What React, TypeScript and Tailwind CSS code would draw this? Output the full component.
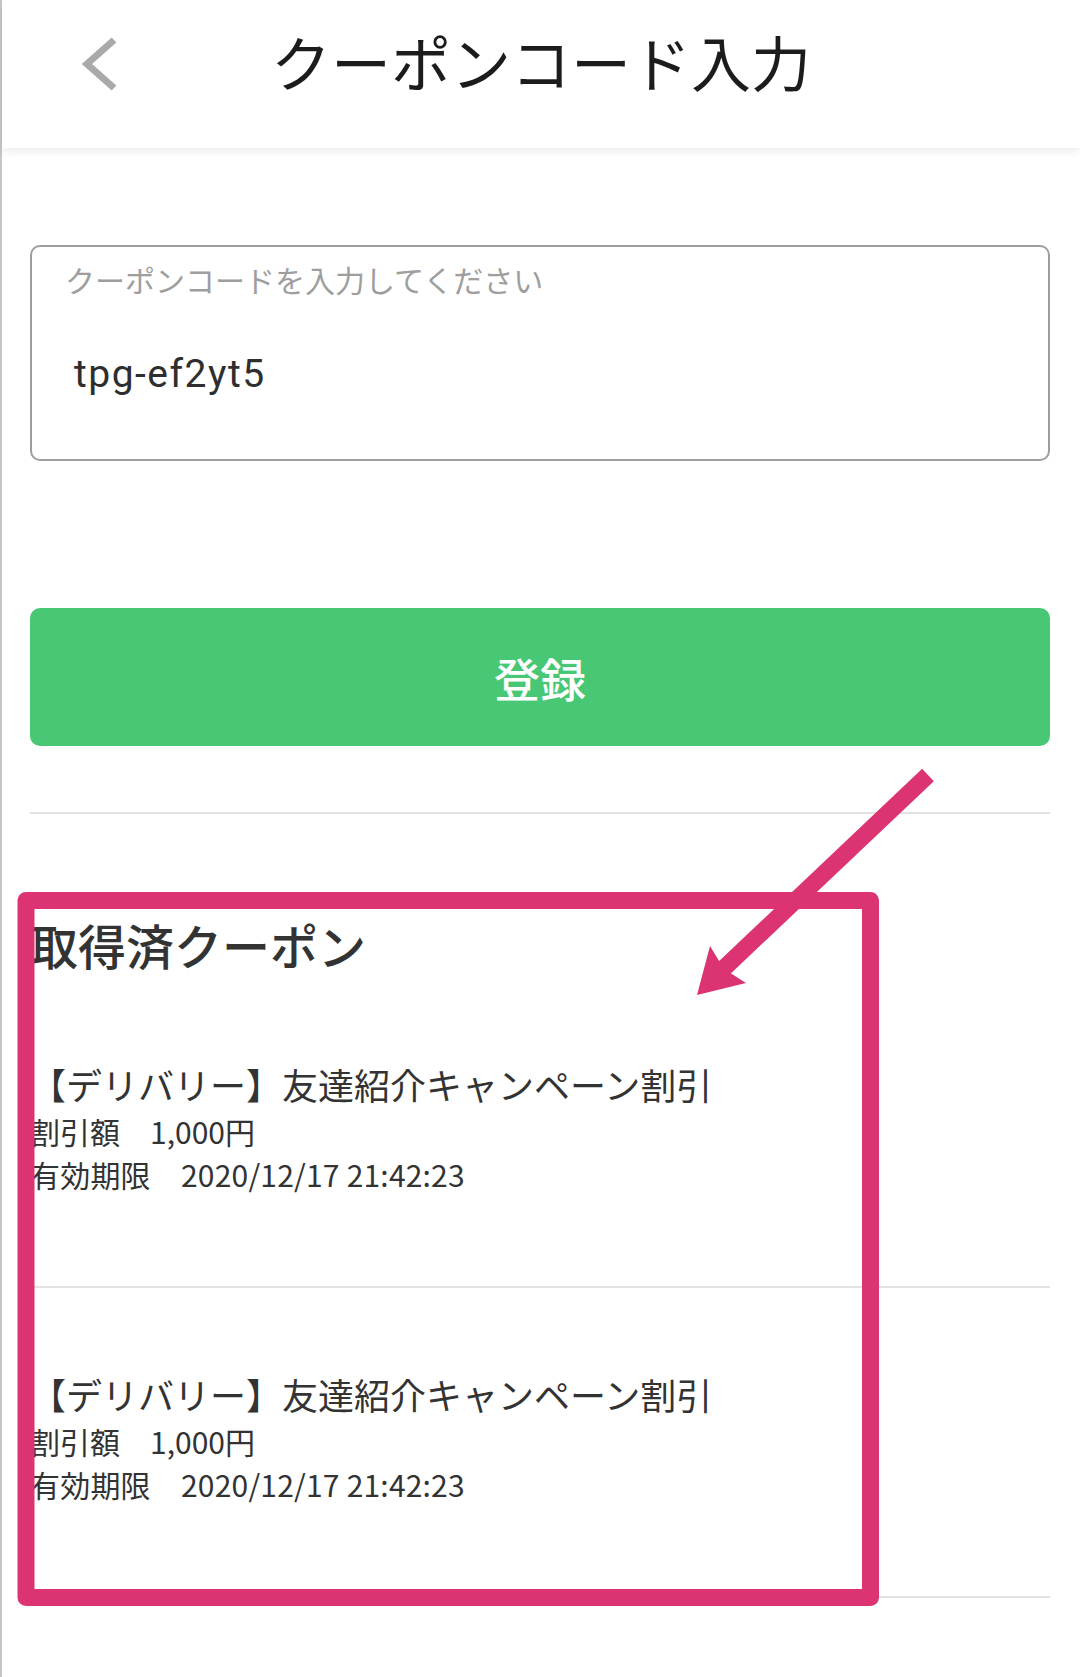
import React from 'react'

const coupons = [
  { title: '【デリバリー】友達紹介キャンペーン割引', amount: '1,000円', expires: '2020/12/17 21:42:23' },
  { title: '【デリバリー】友達紹介キャンペーン割引', amount: '1,000円', expires: '2020/12/17 21:42:23' },
]

function BackIcon() {
  return (
    <svg width="40" height="60" viewBox="0 0 40 60" className="ml-[78px] mt-[6px]">
      <polyline points="34,6 7,30 34,54" fill="none" stroke="#a9a9a9" strokeWidth="7" strokeLinejoin="miter" />
    </svg>
  )
}

function Annotation() {
  return (
    <svg className="pointer-events-none absolute left-0 top-0" width="1080" height="1677" viewBox="0 0 1080 1677">
      {/* highlight box */}
      <rect x="24" y="900.5" width="844.5" height="697" fill="none" stroke="#dc3473" strokeWidth="17" strokeLinejoin="round" />
      {/* arrow */}
      <line x1="926" y1="775" x2="718" y2="972" stroke="#dc3473" strokeWidth="17" />
      <polygon points="695,995 708,946 722,969 744,983" fill="#dc3473" />
    </svg>
  )
}

export default function App() {
  return (
    <div className="relative min-h-[1677px] w-[1080px] border-l-2 border-[#c6c6c6] bg-white font-['Noto_Sans_CJK_JP','Noto_Sans',sans-serif]">
      {/* Header */}
      <header className="relative z-10 h-[148px] bg-white shadow-[0_4px_8px_rgba(0,0,0,0.07)]">
        <div className="grid h-[122px] grid-cols-[1fr_auto_1fr] items-center">
          <div>
            <BackIcon />
          </div>
          <h1 className="text-[60px] leading-none font-normal text-[#1c1c1c]">クーポンコード入力</h1>
          <div />
        </div>
      </header>

      <main className="pl-[28px] pr-[30px]">
        {/* Coupon code input */}
        <div className="mt-[97px] h-[216px] rounded-[10px] border-2 border-[#9e9e9e] pl-[33px] pt-[17px]">
          <div className="text-[30px] leading-none text-[#9e9e9e]">クーポンコードを入力してください</div>
          <div className="ml-[9px] mt-[61px] font-['Roboto',sans-serif] text-[39px] leading-none tracking-[1.5px] text-[#2e2e2e]">
            tpg-ef2yt5
          </div>
        </div>

        {/* Submit */}
        <button className="mt-[147px] flex h-[138px] w-full items-center justify-center rounded-[10px] bg-[#48c774] text-[46px] leading-none font-medium text-white">
          登録
        </button>

        <div className="mt-[66px] h-[2px] bg-[#e2e2e2]" />

        {/* Acquired coupons */}
        <h2 className="mb-[10px] mt-[106px] text-[48px] leading-none font-medium text-[#333]">取得済クーポン</h2>

        {coupons.map((c, i) => (
          <div key={i} className="border-b-2 border-[#e2e2e2] pb-[90px] pt-[82px] text-[#333]">
            <div className="text-[36px] leading-[48px]">{c.title}</div>
            <div className="mt-[2px] text-[30px] leading-[43px]">割引額　{c.amount}</div>
            <div className="text-[30px] leading-[43px] tracking-[0.2px]">有効期限　{c.expires}</div>
          </div>
        ))}
      </main>

      <Annotation />
    </div>
  )
}
